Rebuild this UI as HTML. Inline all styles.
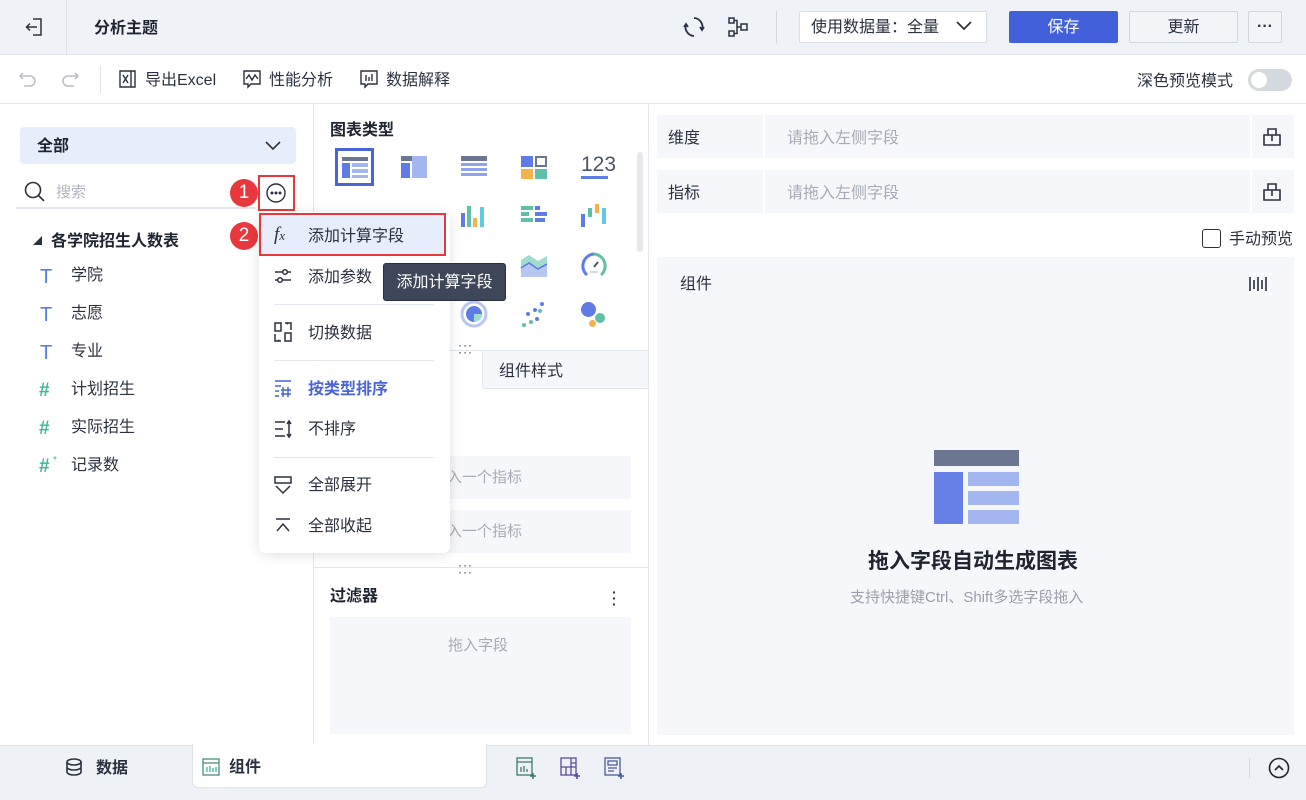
<!DOCTYPE html>
<html><head><meta charset="utf-8">
<style>
*{margin:0;padding:0;box-sizing:border-box}
body{width:1306px;height:800px;position:relative;overflow:hidden;background:#fff;font-family:"Liberation Sans","Noto Sans CJK SC",sans-serif;color:#2b3140;font-size:15px}
.a{position:absolute}
.t{position:absolute;white-space:nowrap;line-height:1.3;margin-top:2px}
.gray{color:#9aa0ab}
svg{position:absolute;overflow:visible}
</style></head><body>
<!-- top bar -->
<div class="a" style="left:0;top:0;width:1306px;height:55px;background:#eff2f7;border-bottom:1px solid #e1e5ec"></div>
<div class="a" style="left:66px;top:0;width:1px;height:55px;background:#dde1e8"></div>
<svg style="left:24px;top:17px" width="20" height="20" viewBox="0 0 20 20" fill="none" stroke="#333" stroke-width="1.5"><path d="M9 2h8v16H9"/><path d="M13 10H3M6 6.5L2.5 10 6 13.5"/></svg>
<div class="t" style="left:94px;top:17px;font-size:16px;font-weight:bold;color:#1f2430">分析主题</div>
<svg style="left:683px;top:16px" width="22" height="22" viewBox="0 0 22 22" fill="none" stroke="#2b3140" stroke-width="1.8"><path d="M11 2a9 9 0 0 1 8 12M11 20A9 9 0 0 1 3 8"/><path d="M17 11l2 3 2-3M5 11L3 8 1 11"/></svg>
<svg style="left:727px;top:16px" width="22" height="22" viewBox="0 0 22 22" fill="none" stroke="#2b3140" stroke-width="1.5"><rect x="2" y="2" width="5" height="5"/><rect x="2" y="15" width="5" height="5"/><rect x="14" y="8" width="6" height="6"/><path d="M7 4.5h3v13H7M10 11h4"/></svg>
<div class="a" style="left:776px;top:11px;width:1px;height:33px;background:#d5d9e0"></div>
<div class="a" style="left:799px;top:11px;width:188px;height:32px;border:1px solid #d9dde4;background:#fff;border-radius:2px"></div>
<div class="t" style="left:811px;top:16px;font-size:16px;color:#2b3140">使用数据量：全量</div>
<svg style="left:956px;top:21px" width="16" height="10" viewBox="0 0 16 10" fill="none" stroke="#333" stroke-width="1.8"><path d="M1 1l7 7 7-7"/></svg>
<div class="a" style="left:1009px;top:11px;width:109px;height:32px;background:#4260d9;border-radius:2px;color:#fff;font-size:16px;text-align:center;line-height:34px">保存</div>
<div class="a" style="left:1129px;top:11px;width:109px;height:32px;background:#f2f4f8;border:1px solid #d2d6dd;border-radius:2px;font-size:16px;text-align:center;line-height:32px">更新</div>
<div class="a" style="left:1248px;top:11px;width:34px;height:32px;background:#f2f4f8;border:1px solid #d2d6dd;border-radius:2px;font-size:16px;text-align:center;line-height:30px;font-weight:bold">···</div>

<!-- toolbar -->
<div class="a" style="left:0;top:103px;width:1306px;height:1px;background:#e3e6ec"></div>
<svg style="left:18px;top:70px" width="20" height="18" viewBox="0 0 20 18" fill="none" stroke="#b8bdc7" stroke-width="1.5"><path d="M5 3L2 6l3 3M2 6h10a5 5 0 0 1 0 10H6"/></svg>
<svg style="left:60px;top:70px" width="20" height="18" viewBox="0 0 20 18" fill="none" stroke="#b8bdc7" stroke-width="1.5"><path d="M15 3l3 3-3 3M18 6H8a5 5 0 0 0 0 10h6"/></svg>
<div class="a" style="left:100px;top:66px;width:1px;height:27px;background:#e1e4ea"></div>
<svg style="left:119px;top:70px" width="18" height="18" viewBox="0 0 18 18" fill="none" stroke="#2b3140" stroke-width="1.4"><path d="M1 1h11v16H1zM12 1h4v16h-4"/><path d="M4 5l5 8M9 5l-5 8"/></svg>
<div class="t" style="left:145px;top:69px;font-size:16px">导出Excel</div>
<svg style="left:243px;top:70px" width="18" height="18" viewBox="0 0 18 18" fill="none" stroke="#2b3140" stroke-width="1.4"><path d="M1 1h16v13H8l-3 3v-3H1z"/><path d="M3 9l3-4 3 5 3-5 3 4"/></svg>
<div class="t" style="left:269px;top:69px;font-size:16px">性能分析</div>
<svg style="left:360px;top:70px" width="18" height="18" viewBox="0 0 18 18" fill="none" stroke="#2b3140" stroke-width="1.4"><path d="M1 1h16v13H8l-3 3v-3H1z"/><path d="M6 5v6M9 7v4M12 4v7"/></svg>
<div class="t" style="left:386px;top:69px;font-size:16px">数据解释</div>
<div class="t" style="left:1137px;top:70px;font-size:16px">深色预览模式</div>
<div class="a" style="left:1248px;top:69px;width:44px;height:22px;background:#d4d8df;border-radius:11px"></div>
<div class="a" style="left:1251px;top:72px;width:16px;height:16px;background:#fff;border-radius:50%"></div>

<!-- left panel -->
<div class="a" style="left:313px;top:104px;width:1px;height:641px;background:#e3e6ec"></div>
<div class="a" style="left:20px;top:127px;width:276px;height:37px;background:#e6eefc;border-radius:4px"></div>
<div class="t" style="left:37px;top:135px;font-size:16px;font-weight:bold;color:#1f2430">全部</div>
<svg style="left:265px;top:141px" width="16" height="10" viewBox="0 0 16 10" fill="none" stroke="#333" stroke-width="1.6"><path d="M1 1l7 7 7-7"/></svg>
<svg style="left:24px;top:181px" width="22" height="22" viewBox="0 0 22 22" fill="none" stroke="#2b3140" stroke-width="1.6"><circle cx="9" cy="9" r="7.5"/><path d="M14.5 14.5L20 20"/></svg>
<div class="t gray" style="left:56px;top:181px;font-size:15px;color:#b0b5bf">搜索</div>
<div class="a" style="left:16px;top:207px;width:240px;height:2px;background:#e3e6ec"></div>
<div class="a" style="left:258px;top:175px;width:37px;height:36px;border:2px solid #e8383d"></div>
<svg style="left:265px;top:182px" width="22" height="22" viewBox="0 0 22 22" fill="none" stroke="#2b3140" stroke-width="1.4"><circle cx="11" cy="11" r="9"/><circle cx="7" cy="11" r=".8" fill="#2b3140"/><circle cx="11" cy="11" r=".8" fill="#2b3140"/><circle cx="15" cy="11" r=".8" fill="#2b3140"/></svg>
<div class="a" style="left:230px;top:179px;width:28px;height:28px;border-radius:50%;background:#e8383d;color:#fff;font-size:19px;text-align:center;line-height:28px">1</div>
<div class="a" style="left:230px;top:222px;width:28px;height:28px;border-radius:50%;background:#e8383d;color:#fff;font-size:19px;text-align:center;line-height:28px">2</div>
<div class="t" style="left:33px;top:234px;font-size:9px">◢</div>
<div class="t" style="left:51px;top:230px;font-size:16px;font-weight:bold;color:#1f2430">各学院招生人数表</div>
<div class="t" style="left:40px;top:262px;font-size:20px;color:#5a7fe0">T</div><div class="t" style="left:71px;top:264px;font-size:16px">学院</div>
<div class="t" style="left:40px;top:300px;font-size:20px;color:#5a7fe0">T</div><div class="t" style="left:71px;top:302px;font-size:16px">志愿</div>
<div class="t" style="left:40px;top:338px;font-size:20px;color:#5a7fe0">T</div><div class="t" style="left:71px;top:340px;font-size:16px">专业</div>
<div class="t" style="left:39px;top:377px;font-size:19px;color:#3cb99a;font-weight:bold">#</div><div class="t" style="left:71px;top:378px;font-size:16px">计划招生</div>
<div class="t" style="left:39px;top:415px;font-size:19px;color:#3cb99a;font-weight:bold">#</div><div class="t" style="left:71px;top:416px;font-size:16px">实际招生</div>
<div class="t" style="left:39px;top:453px;font-size:19px;color:#3cb99a;font-weight:bold">#</div><div class="t" style="left:53px;top:452px;font-size:10px;color:#3cb99a">*</div><div class="t" style="left:71px;top:454px;font-size:16px">记录数</div>

<!-- middle panel -->
<div class="a" style="left:648px;top:104px;width:1px;height:641px;background:#e3e6ec"></div>
<div class="t" style="left:330px;top:119px;font-size:16px;font-weight:bold;color:#1f2430">图表类型</div>
<div class="a" style="left:637px;top:152px;width:6px;height:100px;background:#e6e8ec;border-radius:3px"></div>
<div class="a" style="left:335px;top:148px;width:39px;height:38px;border:3px solid #4a64d8"></div>
<div class="a" style="left:342px;top:157px;width:26px;height:4px;background:#6b7690"></div>
<div class="a" style="left:342px;top:163px;width:8px;height:15px;background:#5f7be5"></div>
<div class="a" style="left:352px;top:163px;width:16px;height:4px;background:#a3b6f0"></div>
<div class="a" style="left:352px;top:169px;width:16px;height:4px;background:#a3b6f0"></div>
<div class="a" style="left:352px;top:175px;width:16px;height:3px;background:#a3b6f0"></div>
<div class="a" style="left:401px;top:156px;width:26px;height:5px;background:#6b7690"></div>
<div class="a" style="left:401px;top:163px;width:9px;height:15px;background:#5f7be5"></div>
<div class="a" style="left:412px;top:156px;width:15px;height:22px;background:#a3b6f0"></div>
<div class="a" style="left:461px;top:156px;width:26px;height:5px;background:#6b7690"></div>
<div class="a" style="left:461px;top:163px;width:26px;height:15px;background:repeating-linear-gradient(#8ea3ee 0 3px,#fff 3px 5px)"></div>
<div class="a" style="left:521px;top:156px;width:12px;height:11px;background:#5f7be5"></div>
<div class="a" style="left:535px;top:156px;width:12px;height:11px;border:2px solid #6b7690"></div>
<div class="a" style="left:521px;top:169px;width:12px;height:10px;background:#f4b24a"></div>
<div class="a" style="left:535px;top:169px;width:12px;height:10px;background:#5fbfa8"></div>
<div class="t" style="left:581px;top:149px;font-size:21px;color:#4a5568">123</div>
<div class="a" style="left:581px;top:176px;width:27px;height:3px;background:#5f7be5"></div>
<div class="a" style="left:461px;top:213px;width:4px;height:14px;background:#5f7be5"></div>
<div class="a" style="left:467px;top:206px;width:4px;height:21px;background:#5fbfa8"></div>
<div class="a" style="left:473px;top:218px;width:4px;height:9px;background:#f4b24a"></div>
<div class="a" style="left:480px;top:207px;width:4px;height:20px;background:#60c8e8"></div>
<div class="a" style="left:521px;top:206px;width:12px;height:4px;background:#5fbfa8"></div><div class="a" style="left:535px;top:206px;width:5px;height:4px;background:#5f7be5"></div>
<div class="a" style="left:521px;top:212px;width:8px;height:4px;background:#5fbfa8"></div><div class="a" style="left:535px;top:212px;width:12px;height:4px;background:#5f7be5"></div>
<div class="a" style="left:521px;top:218px;width:12px;height:4px;background:#5fbfa8"></div><div class="a" style="left:535px;top:218px;width:10px;height:4px;background:#5f7be5"></div>
<div class="a" style="left:581px;top:214px;width:4px;height:13px;background:#5f7be5"></div>
<div class="a" style="left:588px;top:208px;width:4px;height:9px;background:#5fbfa8"></div>
<div class="a" style="left:595px;top:204px;width:4px;height:9px;background:#f4b24a"></div>
<div class="a" style="left:602px;top:208px;width:4px;height:16px;background:#60c8e8"></div>
<svg style="left:520px;top:254px" width="28" height="24" viewBox="0 0 28 24"><path d="M1 6l8-5 9 6 9-5v8l-9 5-9-6-8 5z" fill="#9fdccd"/><path d="M1 14l8-5 9 6 9-5v13H1z" fill="#b8c6f3"/><path d="M1 14l8-5 9 6 9-5" stroke="#5f7be5" stroke-width="1.6" fill="none"/></svg>
<svg style="left:580px;top:252px" width="28" height="28" viewBox="0 0 28 28" fill="none" stroke-width="3"><path d="M7 23A12 12 0 0 1 14 2" stroke="#5f7be5"/><path d="M14 2a12 12 0 0 1 7 21" stroke="#5fbfa8"/><path d="M10 20h8" stroke="#ccc" stroke-width="1.5"/><path d="M14 15l4-5" stroke="#4a5568" stroke-width="2"/></svg>
<svg style="left:460px;top:300px" width="28" height="28" viewBox="0 0 28 28"><circle cx="14" cy="14" r="12" fill="none" stroke="#b8c6f3" stroke-width="3"/><circle cx="14" cy="14" r="8" fill="#5f7be5"/><path d="M14 14h8a8 8 0 0 1-8 8z" fill="#9fdccd"/></svg>
<svg style="left:520px;top:302px" width="28" height="26" viewBox="0 0 28 26"><g fill="#5f7be5"><circle cx="22" cy="2" r="2"/><circle cx="15" cy="8" r="2"/><circle cx="8" cy="12" r="2"/><circle cx="17" cy="17" r="2"/></g><g fill="#5fbfa8"><circle cx="20" cy="9" r="2"/><circle cx="11" cy="20" r="2"/><circle cx="4" cy="23" r="2"/></g></svg>
<div class="a" style="left:581px;top:302px;width:15px;height:15px;border-radius:50%;background:#5f7be5"></div>
<div class="a" style="left:595px;top:313px;width:10px;height:10px;border-radius:50%;background:#5fbfa8"></div>
<div class="a" style="left:589px;top:320px;width:7px;height:7px;border-radius:50%;background:#f4b24a"></div>
<div class="t" style="left:458px;top:340px;font-size:12px;letter-spacing:1px;line-height:7px">···<br>···</div>
<div class="a" style="left:314px;top:350px;width:334px;height:1px;background:#e3e6ec"></div>
<div class="a" style="left:482px;top:351px;width:166px;height:38px;background:#f6f7fa;border:1px solid #e3e6ec;border-top:none;border-right:none;border-radius:0 0 0 4px"></div>
<div class="t" style="left:499px;top:360px;font-size:16px;color:#2b3140">组件样式</div>
<div class="a" style="left:330px;top:456px;width:301px;height:43px;background:#f6f7fa"></div>
<div class="t gray" style="left:447px;top:466px;font-size:15px;color:#a6abb5">入一个指标</div>
<div class="a" style="left:330px;top:510px;width:301px;height:43px;background:#f6f7fa"></div>
<div class="t gray" style="left:447px;top:520px;font-size:15px;color:#a6abb5">入一个指标</div>
<div class="a" style="left:314px;top:567px;width:334px;height:1px;background:#e3e6ec"></div>
<div class="t" style="left:458px;top:560px;font-size:12px;letter-spacing:1px;line-height:7px">···<br>···</div>
<div class="t" style="left:330px;top:585px;font-size:16px;font-weight:bold;color:#1f2430">过滤器</div>
<div class="t" style="left:612px;top:587px;font-size:14px;font-weight:bold;line-height:6px">·<br>·<br>·</div>
<div class="a" style="left:330px;top:617px;width:301px;height:117px;background:#f6f7fa"></div>
<div class="t gray" style="left:448px;top:634px;font-size:15px;color:#a6abb5">拖入字段</div>

<!-- right panel -->
<div class="a" style="left:657px;top:115px;width:637px;height:43px;background:#f6f7fa"></div>
<div class="a" style="left:763px;top:115px;width:2px;height:43px;background:#fff"></div>
<div class="a" style="left:1250px;top:115px;width:2px;height:43px;background:#fff"></div>
<div class="t" style="left:668px;top:127px;font-size:16px">维度</div>
<div class="t gray" style="left:787px;top:127px;font-size:16px;color:#a6abb5">请拖入左侧字段</div>
<svg style="left:1263px;top:128px" width="18" height="18" viewBox="0 0 18 18" fill="none" stroke="#2b3140" stroke-width="1.6"><path d="M5 7V1h8v6M1 7h16v10H1zM9 7v6"/></svg>
<div class="a" style="left:657px;top:170px;width:637px;height:43px;background:#f6f7fa"></div>
<div class="a" style="left:763px;top:170px;width:2px;height:43px;background:#fff"></div>
<div class="a" style="left:1250px;top:170px;width:2px;height:43px;background:#fff"></div>
<div class="t" style="left:668px;top:182px;font-size:16px">指标</div>
<div class="t gray" style="left:787px;top:182px;font-size:16px;color:#a6abb5">请拖入左侧字段</div>
<svg style="left:1263px;top:183px" width="18" height="18" viewBox="0 0 18 18" fill="none" stroke="#2b3140" stroke-width="1.6"><path d="M5 7V1h8v6M1 7h16v10H1zM9 7v6"/></svg>
<div class="a" style="left:1202px;top:229px;width:19px;height:19px;border:1.5px solid #2b3140;border-radius:3px"></div>
<div class="t" style="left:1229px;top:228px;font-size:16px">手动预览</div>
<div class="a" style="left:657px;top:257px;width:637px;height:478px;background:#f6f7fa"></div>
<div class="t" style="left:680px;top:273px;font-size:16px">组件</div>
<svg style="left:1248px;top:276px" width="20" height="16" viewBox="0 0 20 16" stroke="#2b3140" stroke-width="1.6"><path d="M2 1v14M6 4v9M10 1v14M14 4v9M18 1v14"/></svg>
<div class="a" style="left:934px;top:450px;width:85px;height:16px;background:#6b7690"></div>
<div class="a" style="left:934px;top:472px;width:29px;height:52px;background:#6680e8"></div>
<div class="a" style="left:968px;top:472px;width:51px;height:14px;background:#a3b6f0"></div>
<div class="a" style="left:968px;top:491px;width:51px;height:14px;background:#a3b6f0"></div>
<div class="a" style="left:968px;top:510px;width:51px;height:14px;background:#a3b6f0"></div>
<div class="t" style="left:868px;top:546px;font-size:21px;font-weight:bold;color:#1f2430">拖入字段自动生成图表</div>
<div class="t gray" style="left:850px;top:586px;font-size:15px;color:#9aa0ab">支持快捷键Ctrl、Shift多选字段拖入</div>

<!-- bottom bar -->
<div class="a" style="left:0;top:745px;width:1306px;height:55px;background:#eef1f6;border-top:1px solid #dfe3ea"></div>
<div class="a" style="left:192px;top:744px;width:295px;height:44px;background:#fff;border:1px solid #dfe3ea;border-top:none;border-radius:0 0 6px 6px"></div>
<svg style="left:65px;top:758px" width="18" height="18" viewBox="0 0 18 18" fill="none" stroke="#2b3140" stroke-width="1.6"><ellipse cx="9" cy="4" rx="7" ry="3"/><path d="M2 4v10c0 1.7 3 3 7 3s7-1.3 7-3V4M2 9c0 1.7 3 3 7 3s7-1.3 7-3"/></svg>
<div class="t" style="left:96px;top:757px;font-size:16px;font-weight:bold">数据</div>
<svg style="left:202px;top:758px" width="18" height="18" viewBox="0 0 18 18" fill="none" stroke="#4a8d7a" stroke-width="1.3"><rect x="1" y="1" width="16" height="16"/><path d="M1 5h16"/><path d="M5 14V9M8 14V8M11 14v-4M14 14V9" stroke="#3cb99a"/></svg>
<div class="t" style="left:229px;top:756px;font-size:16px;font-weight:bold">组件</div>
<svg style="left:516px;top:757px" width="22" height="22" viewBox="0 0 22 22" fill="none" stroke="#3d7a6a" stroke-width="1.3"><rect x="1" y="1" width="15" height="17"/><path d="M1 5h15M5 15v-5M8 15V9M11 15v-3"/><path d="M17 16v6M14 19h6" stroke-width="1.6"/></svg>
<svg style="left:560px;top:757px" width="22" height="22" viewBox="0 0 22 22" fill="none" stroke="#5a4aa0" stroke-width="1.3"><rect x="1" y="1" width="15" height="17"/><path d="M1 10h15M6 10v8M11 1v17M11 6h5"/><path d="M17 16v6M14 19h6" stroke-width="1.6"/></svg>
<svg style="left:604px;top:757px" width="22" height="22" viewBox="0 0 22 22" fill="none" stroke="#4a5aa0" stroke-width="1.3"><rect x="1" y="1" width="15" height="17"/><path d="M4 4h9v4H4zM4 11h9M4 14h6"/><path d="M17 16v6M14 19h6" stroke-width="1.6"/></svg>
<div class="a" style="left:1249px;top:758px;width:1px;height:20px;background:#d5d9e0"></div>
<svg style="left:1268px;top:757px" width="22" height="22" viewBox="0 0 22 22" fill="none" stroke="#1f2430" stroke-width="1.6"><circle cx="11" cy="11" r="9.5"/><path d="M7 13l4-4 4 4"/></svg>

<!-- dropdown menu -->
<div class="a" style="left:259px;top:212px;width:191px;height:341px;background:#fff;border-radius:6px;box-shadow:0 2px 12px rgba(0,0,0,.12)"></div>
<div class="a" style="left:259px;top:213px;width:187px;height:43px;background:#e6eefc;border:2px solid #e8383d"></div>
<div class="t" style="left:274px;top:221px;font-size:19px;font-style:italic;font-family:'Liberation Serif',serif">f<span style="font-size:13px">x</span></div>
<div class="t" style="left:308px;top:225px;font-size:16px">添加计算字段</div>
<svg style="left:274px;top:268px" width="18" height="16" viewBox="0 0 18 16" fill="none" stroke="#2b3140" stroke-width="1.5"><path d="M1 4h16M1 12h16"/><circle cx="11" cy="4" r="2.3" fill="#fff"/><circle cx="6" cy="12" r="2.3" fill="#fff"/></svg>
<div class="t" style="left:308px;top:266px;font-size:16px">添加参数</div>
<div class="a" style="left:274px;top:304px;width:160px;height:1px;background:#e3e6ec"></div>
<svg style="left:274px;top:322px" width="18" height="20" viewBox="0 0 18 20" fill="none" stroke="#2b3140" stroke-width="1.5"><rect x="1" y="1" width="6" height="8"/><rect x="11" y="11" width="6" height="8"/><path d="M1 12v7h6M17 8V1h-6M14 2l-2-1M4 18l2 1"/></svg>
<div class="t" style="left:308px;top:322px;font-size:16px">切换数据</div>
<div class="a" style="left:274px;top:360px;width:160px;height:1px;background:#e3e6ec"></div>
<svg style="left:274px;top:379px" width="18" height="18" viewBox="0 0 18 18" fill="none" stroke="#4a64d8" stroke-width="1.5"><path d="M1 2h16M1 7h6M1 12h4M1 17h4M9 8v10M14 8v10M7 11h10M7 15h10"/></svg>
<div class="t" style="left:308px;top:378px;font-size:16px;font-weight:bold;color:#4a64d8">按类型排序</div>
<svg style="left:274px;top:420px" width="18" height="18" viewBox="0 0 18 18" fill="none" stroke="#2b3140" stroke-width="1.5"><path d="M1 2h10M1 9h8M1 16h10M15 1v16M13 4l2-3 2 3M13 14l2 3 2-3"/></svg>
<div class="t" style="left:308px;top:418px;font-size:16px">不排序</div>
<div class="a" style="left:274px;top:457px;width:160px;height:1px;background:#e3e6ec"></div>
<svg style="left:274px;top:476px" width="18" height="18" viewBox="0 0 18 18" fill="none" stroke="#2b3140" stroke-width="1.5"><path d="M1 1h16v6H1zM2 10l7 7 7-7"/></svg>
<div class="t" style="left:308px;top:474px;font-size:16px">全部展开</div>
<svg style="left:274px;top:518px" width="18" height="16" viewBox="0 0 18 16" fill="none" stroke="#2b3140" stroke-width="1.5"><path d="M2 1h14M3 13l6-7 6 7"/></svg>
<div class="t" style="left:308px;top:515px;font-size:16px">全部收起</div>

<!-- tooltip -->
<div class="a" style="left:383px;top:263px;width:123px;height:38px;background:#3e4659;border:1px solid #2a3040;border-radius:3px;color:#fff;font-size:16px;text-align:center;line-height:38px">添加计算字段</div>
</body></html>
